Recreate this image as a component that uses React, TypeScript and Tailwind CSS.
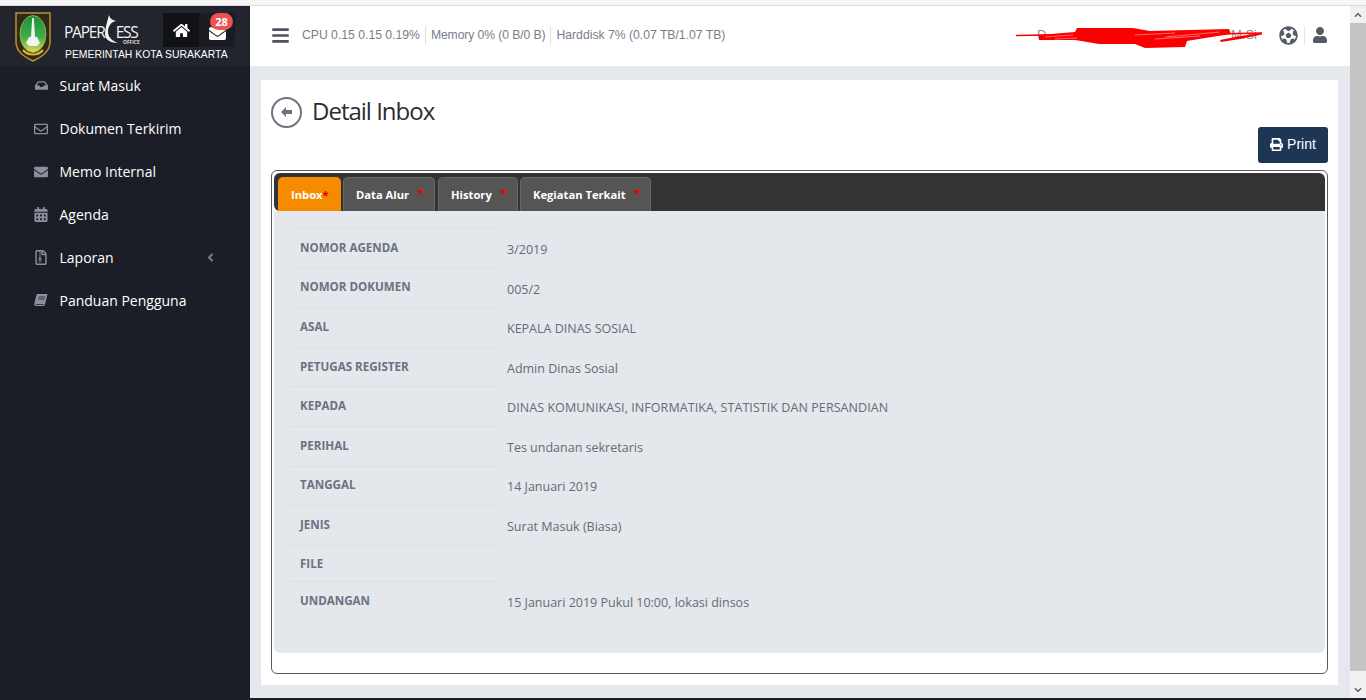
import React from "react";
import { FaHome, FaEnvelope, FaRegEnvelope, FaInbox, FaCalendarAlt, FaRegFileArchive, FaAngleLeft, FaBars, FaFutbol, FaUser, FaPrint, FaChevronUp, FaChevronDown } from "react-icons/fa";

function BookIcon() {
  return (
    <svg width="14" height="13" viewBox="0 0 14 13" fill="currentColor">
      <path d="M4 0H13.5L11 10.5C10.8 11.3 10.2 12 9 12H2C0.6 12 0 11 0.3 9.8L2.4 1.2C2.6 0.5 3.2 0 4 0Z" />
      <path d="M1.8 10.2H10L9.7 11H2Z" fill="#1b1e26" />
      <path d="M4.6 3H11M4.2 5H10.5" stroke="#1b1e26" strokeWidth="0.8" />
    </svg>
  );
}

const menu = [
  { icon: <FaInbox size={13} />, label: "Surat Masuk" },
  { icon: <FaRegEnvelope size={14} />, label: "Dokumen Terkirim" },
  { icon: <FaEnvelope size={14} />, label: "Memo Internal" },
  { icon: <FaCalendarAlt size={15} />, label: "Agenda" },
  { icon: <FaRegFileArchive size={15} />, label: "Laporan", arrow: true },
  { icon: <BookIcon />, label: "Panduan Pengguna" },
];

const rows: { label: string; value: string; short?: boolean; wide?: boolean; tight?: boolean }[] = [
  { label: "NOMOR AGENDA", value: "3/2019" },
  { label: "NOMOR DOKUMEN", value: "005/2" },
  { label: "ASAL", value: "KEPALA DINAS SOSIAL" },
  { label: "PETUGAS REGISTER", value: "Admin Dinas Sosial" },
  { label: "KEPADA", value: "DINAS KOMUNIKASI, INFORMATIKA, STATISTIK DAN PERSANDIAN", wide: true },
  { label: "PERIHAL", value: "Tes undanan sekretaris" },
  { label: "TANGGAL", value: "14 Januari 2019", tight: true },
  { label: "JENIS", value: "Surat Masuk (Biasa)" },
  { label: "FILE", value: "", short: true },
  { label: "UNDANGAN", value: "15 Januari 2019 Pukul 10:00, lokasi dinsos" },
];

const tabs = [
  { label: "Data Alur", cls: "w-[92px]" },
  { label: "History", cls: "w-[80px] ml-[1px]" },
  { label: "Kegiatan Terkait", cls: "w-[131px]" },
];

function Crest() {
  return (
    <svg width="36" height="50" viewBox="0 0 36 50" className="shrink-0">
      <defs>
        <linearGradient id="oval" x1="0" y1="0" x2="0" y2="1">
          <stop offset="0" stopColor="#1c8f3a" />
          <stop offset="0.6" stopColor="#3fb04a" />
          <stop offset="1" stopColor="#e6d95a" />
        </linearGradient>
      </defs>
      <path d="M1 1H35V30C35 40 26 45 18 49C10 45 1 40 1 30Z" fill="#2e2a1c" stroke="#b8932c" strokeWidth="1.5" />
      <ellipse cx="18" cy="22" rx="13" ry="18.5" fill="url(#oval)" stroke="#c9a436" strokeWidth="0.8" />
      <path d="M17.2 6H18.8L20 25H16Z" fill="#f4f4f0" />
      <path d="M11 31L14 25H22L25 31L22 34H14Z" fill="#f4f4f0" />
      <path d="M8 38C13 44 23 44 28 38" stroke="#d9b93b" strokeWidth="2" fill="none" />
    </svg>
  );
}

function Scribble() {
  return (
    <svg width="248" height="22" viewBox="0 0 248 22" className="absolute left-[-22px] top-0">
      <path d="M1 8.5L30 8L100 9L200 7L247 6" stroke="#fb0000" strokeWidth="1.3" fill="none" />
      <path d="M24 8L60 5L62 1L118 1L135 4L214 2L216 7L190 11L172 14L170 20L130 21L120 17L84 17L60 13L24 13Z" fill="#fb0000" />
      <path d="M205 13L225 9L247 6L247 7.5L225 12L206 15Z" fill="#fb0000" />
      <path d="M30 10L58 8M120 8L160 6M150 10L205 5M140 12L185 9M40 12L62 11" stroke="#ffffff" strokeWidth="0.6" opacity="0.7" fill="none" />
    </svg>
  );
}

export default function App() {
  return (
    <div className="w-[1366px] h-[700px] overflow-hidden flex flex-col bg-white font-['Open_Sans',sans-serif]">
      <div className="h-[6px] shrink-0 bg-[#f6f6f6] border-b border-[#d9dbde]" />
      <div className="flex flex-1 min-h-0">
        <aside className="w-[250px] shrink-0 bg-[#1b1e26] flex flex-col">
          <div className="h-[60px] shrink-0 bg-[#22252d] flex pl-[15px] pt-[6px]">
            <Crest />
            <div className="ml-[14px] flex flex-col">
              <div className="flex h-[34px] mt-[1px]">
                <div className="w-[98px] relative text-[#f2f2f2] text-[15.5px] leading-[14px] pt-[12px] pl-[-1px] tracking-[-1.2px] flex">
                  <span className="-ml-[1px]">PAPER</span>
                  <svg width="14" height="28" viewBox="0 0 14 28" className="shrink-0 mt-[-10px] ml-[-1px]">
                    <path d="M5 0C3 7 1 14 1 19C1 25 7 28 14 28C9 26 4 23 4 17C4 11 7 7 12 6C9 5 6 4 5 0Z" fill="#f2f2f2" />
                  </svg>
                  <span className="-ml-[2px]">ESS</span>
                  <span className="absolute left-[58px] top-[26px] text-[5px] leading-[6px] tracking-normal font-semibold">OFFICE</span>
                </div>
                <div className="w-[36px] h-[34px] bg-[#101216] flex items-center justify-center text-white"><FaHome size={17} /></div>
                <div className="w-[36px] h-[34px] bg-[#1a1c22] relative flex items-center justify-center text-white">
                  <span className="mt-[6px] ml-[1px]"><FaEnvelope size={17} /></span>
                  <span className="absolute left-[11px] top-0 w-[23px] h-[17px] rounded-full bg-[#ee5152] text-white text-[11px] font-bold leading-[17px] text-center">28</span>
                </div>
              </div>
              <div className="text-[10.4px] leading-[14px] mt-[1px] text-white font-['Liberation_Sans',sans-serif] whitespace-nowrap">PEMERINTAH KOTA SURAKARTA</div>
            </div>
          </div>
          <nav className="flex flex-col -mt-[2px]">
            {menu.map((m) => (
              <div key={m.label} className="h-[43px] flex items-center pl-[34px] text-[14px] text-white">
                <span className="w-[14px] flex justify-center text-[#8b909c]">{m.icon}</span>
                <span className="ml-[11.5px] flex-1">{m.label}</span>
                {m.arrow && <span className="mr-[33px] text-[#777c88]"><FaAngleLeft size={13} /></span>}
              </div>
            ))}
          </nav>
        </aside>

        <main className="flex-1 min-w-0 flex flex-col bg-[#e5e8ec]">
          <header className="h-[60px] shrink-0 bg-white flex items-center pl-[21px] pr-[22px] pb-[2px] font-['Liberation_Sans',sans-serif] text-[12.2px] text-[#777e8a]">
            <span className="text-[#4f5360]"><FaBars size={19} /></span>
            <span className="ml-[12px] pr-[5px] border-r border-[#dcdee2] leading-[17px]">CPU 0.15 0.15 0.19%</span>
            <span className="ml-[5px] pr-[5px] border-r border-[#dcdee2] leading-[17px] tracking-[-0.1px]">Memory 0% (0 B/0 B)</span>
            <span className="ml-[5px] leading-[17px]">Harddisk 7% (0.07 TB/1.07 TB)</span>
            <div className="ml-auto flex items-center">
              <div className="relative w-[220px] flex justify-between text-[13px] text-[#8a8f99] leading-[16px]">
                <span>D</span>
                <span>M.Si</span>
                <Scribble />
              </div>
              <span className="ml-[22px] pr-[6px] border-r border-[#e3e4e7] text-[#555a66]"><FaFutbol size={19} /></span>
              <span className="ml-[7px] text-[#555a66]"><FaUser size={16} /></span>
            </div>
          </header>
          <div className="flex-1 min-h-0 pl-[11px] pr-[12px] pt-[14px] pb-[13px] flex">
            <section className="flex-1 bg-white px-[10px] pt-[17px] pb-[11px] flex flex-col">
              <div className="flex items-center h-[30px]">
                <span className="w-[31px] h-[31px] rounded-full border-2 border-[#6f747c] flex items-center justify-center text-[#6f747c]">
                  <svg width="11" height="10" viewBox="0 0 11 10" fill="currentColor"><path d="M0 5L5 0V3H11V7H5V10Z" /></svg>
                </span>
                <h1 className="ml-[10px] -mt-[2px] text-[24px] leading-[30px] tracking-[-1px] text-[#2b2d33]">Detail Inbox</h1>
              </div>
              <div className="flex justify-end mb-[7px]">
                <button className="w-[70px] h-[36px] rounded-[3px] bg-[#1c3654] text-white text-[14px] leading-[17px] pb-[2px] font-['Liberation_Sans',sans-serif] flex items-center justify-center gap-[4px]">
                  <FaPrint size={13} /> Print
                </button>
              </div>
              <div className="flex-1 min-h-0 border border-[#5a5a5a] rounded-[6px] px-[2px] pt-[2px] flex flex-col">
                <div className="h-[38px] shrink-0 bg-[#333333] rounded-t-[6px] rounded-bl-[6px] pl-[4px] pt-[4px] flex gap-[2px]">
                  <div className="w-[63px] h-[34px] rounded-t-[5px] bg-[#f68b00] text-white text-[11.2px] font-bold leading-[36px] pl-[13px]">Inbox<span className="text-[#e00000]">*</span></div>
                  {tabs.map((t) => (
                    <div key={t.label} className={`${t.cls} h-[34px] rounded-t-[5px] bg-[#555555] border border-b-0 border-[#666666] text-white text-[11.2px] font-bold leading-[34px] pl-[12px] flex`}>
                      <span>{t.label}</span>
                      <span className="ml-[8px] text-[12px] text-[#e80000]">*</span>
                    </div>
                  ))}
                </div>
                <div className="flex-1 min-h-0 mb-[20px] bg-[#e4e7eb] rounded-b-[6px] pl-[17px] pr-[20px] pt-[17px]">
                  {rows.map((r) => (
                    <div key={r.label} className={`flex ${r.short ? "h-[36px]" : "h-[39.6px]"}`}>
                      <div className={`w-[204px] shrink-0 border-t border-[#dbdee3] pl-[9px] text-[11.6px] leading-[17px] font-bold text-[#6b7280] ${r.short ? "pt-[9.6px]" : "pt-[9.8px]"}`}>{r.label}</div>
                      <div className={`flex-1 border-t border-[#dfe2e6] pl-[12px] text-[12.5px] leading-[17px] text-[#646b78] ${r.wide ? "tracking-[0.07px]" : ""} ${r.tight ? "pt-[11px]" : "pt-[12px]"}`}>{r.value}</div>
                    </div>
                  ))}
                </div>
              </div>
            </section>
          </div>
        </main>

        <div className="w-[16px] shrink-0 bg-[#f1f1f1] flex flex-col">
          <div className="h-[17px] flex items-center justify-center text-[#505050]"><FaChevronUp size={8} /></div>
          <div className="flex-1 bg-[#c4c4c4]" />
          <div className="h-[27px] flex items-end justify-center pb-[4px] text-[#505050]"><FaChevronDown size={8} /></div>
        </div>
      </div>
      <div className="h-[2px] shrink-0 bg-[#1d1f24]" />
    </div>
  );
}
